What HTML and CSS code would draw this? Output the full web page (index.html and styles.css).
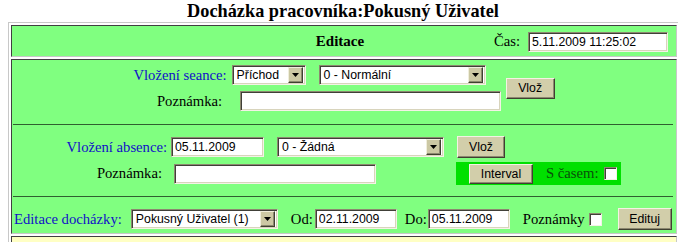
FILE: index.html
```html
<!DOCTYPE html>
<html>
<head>
<meta charset="utf-8">
<link rel="stylesheet" href="styles.css">
</head>
<body>
<div class="title">Docházka pracovníka:Pokusný Uživatel</div>
<table class="main">
  <tr>
    <td class="cell head">
      <div class="headgrid">
        <span></span>
        <b class="htitle">Editace</b>
        <span class="cas">Čas: <input class="inp w139" value="5.11.2009 11:25:02"></span>
      </div>
    </td>
  </tr>
  <tr>
    <td class="cell body">
      <div class="sec sec2">
        <div class="grid2">
          <span class="lbl blue l1">Vložení seance:</span>
          <div class="r1">
            <span class="sel w74"><span class="stext">Příchod</span><span class="arr"><svg width="7" height="4" viewBox="0 0 7 4"><path d="M0 0H7L3.5 4Z" fill="#000"/></svg></span></span>
            <span class="sel w167"><span class="stext">0 - Normální</span><span class="arr"><svg width="7" height="4" viewBox="0 0 7 4"><path d="M0 0H7L3.5 4Z" fill="#000"/></svg></span></span>
          </div>
          <button class="btn b2">Vlož</button>
          <span class="lbl l2">Poznámka:</span>
          <input class="inp w261 i2">
        </div>
      </div>
      <hr class="sep">
      <div class="sec sec3">
        <div class="grid3">
          <span class="lbl blue l3">Vložení absence:</span>
          <input class="inp w93" value="05.11.2009">
          <span class="sel w167 s3"><span class="stext">0 - Žádná</span><span class="arr"><svg width="7" height="4" viewBox="0 0 7 4"><path d="M0 0H7L3.5 4Z" fill="#000"/></svg></span></span>
          <button class="btn b3">Vlož</button>
          <span class="lbl p3">Poznámka:</span>
          <input class="inp w202 i3">
          <div class="gbox">
            <button class="btn bint">Interval</button>
            <span class="scas">S časem:</span>
            <span class="chk"></span>
          </div>
        </div>
      </div>
      <hr class="sep">
      <div class="sec sec4">
        <span class="lbl blue">Editace docházky:</span>
        <span class="sel w147 s4"><span class="stext">Pokusný Uživatel (1)</span><span class="arr"><svg width="7" height="4" viewBox="0 0 7 4"><path d="M0 0H7L3.5 4Z" fill="#000"/></svg></span></span>
        <span class="lbl od">Od:</span>
        <input class="inp w82" value="02.11.2009">
        <span class="lbl do">Do:</span>
        <input class="inp w82" value="05.11.2009">
        <span class="lbl pozn">Poznámky</span>
        <span class="chk c4"></span>
        <button class="btn bed">Edituj</button>
      </div>
    </td>
  </tr>
  <tr>
    <td class="cell yellow"></td>
  </tr>
</table>
</body>
</html>
```
FILE: styles.css
```css
html { overflow: hidden; }
body {
  margin: 0 8px;
  background: #fff;
  font-family: "Liberation Serif", "Times New Roman", serif;
  font-size: 14.67px;
  color: #000;
}
.title {
  text-align: center;
  font-weight: bold;
  font-size: 18.3px;
  line-height: 22px;
}
.main {
  width: 672px;
  table-layout: fixed;
  border-spacing: 2px;
  border: 1px solid;
  border-color: #c8c8c8 #505050 #505050 #c8c8c8;
}
.cell {
  background: #80ff80;
  border: 1px solid;
  border-color: #404040 #c8c8c8 #c8c8c8 #404040;
  padding: 0;
  overflow: hidden;
}
.head { height: 30px; padding: 0 8px 0 0; }
.headgrid {
  display: grid;
  grid-template-columns: 1fr auto 1fr;
  align-items: center;
}
.htitle { font-size: 15px; }
.cas {
  justify-self: end;
  display: flex;
  align-items: center;
  gap: 8px;
  padding-top: 1px;
}
.inp {
  box-sizing: border-box;
  height: 20px;
  margin: 0;
  padding: 0 3px;
  font-family: "Liberation Sans", Arial, sans-serif;
  font-size: 12.3px;
  color: #000;
  background: #fff;
  border: 1px solid;
  border-color: #8c8870 #f4f2e6 #f4f2e6 #8c8870;
  box-shadow: inset 1px 1px 0 #404038, inset -1px -1px 0 #d8d4bc;
  outline: none;
}
.w139 { width: 140px; }
.w261 { width: 261px; }
.w93 { width: 93px; }
.w202 { width: 202px; }
.w82 { width: 82px; }
.sel {
  box-sizing: border-box;
  display: inline-flex;
  align-items: center;
  height: 20px;
  padding: 2px;
  font-family: "Liberation Sans", Arial, sans-serif;
  font-size: 12.3px;
  background: #fff;
  border: 1px solid;
  border-color: #8c8870 #f4f2e6 #f4f2e6 #8c8870;
  box-shadow: inset 1px 1px 0 #404038, inset -1px -1px 0 #d8d4bc;
}
.w74 { width: 74px; }
.w167 { width: 167px; }
.w147 { width: 147px; }
.stext { flex: 1; padding-left: 2px; white-space: nowrap; overflow: hidden; }
.arr {
  box-sizing: border-box;
  width: 15px;
  height: 16px;
  display: flex;
  align-items: center;
  justify-content: center;
  background: #ccc8a4;
  border: 1px solid;
  border-color: #f0eedc #404030 #404030 #f0eedc;
  box-shadow: inset -1px -1px 0 #8c8870;
}
.btn {
  box-sizing: border-box;
  height: 21px;
  margin: 0;
  padding: 0;
  font-family: "Liberation Sans", Arial, sans-serif;
  font-size: 12.3px;
  color: #000;
  background: #d2ceaa;
  border: 1px solid;
  border-color: #f4f2e4 #404030 #404030 #f4f2e4;
  box-shadow: inset -1px -1px 0 #8c8870;
}
.blue { color: #1010c8; }
.lbl { white-space: nowrap; }
.sep {
  margin: 0 3px 0 1px;
  border: 0;
  height: 1px;
  background: #2f602f;
}
.body { vertical-align: top; }
.sec2 { padding: 5px 0 13px; }
.grid2 {
  display: grid;
  grid-template-columns: auto auto auto;
  justify-content: center;
  align-items: center;
  row-gap: 6px;
}
.l1 { grid-column: 1; grid-row: 1; justify-self: end; padding-right: 5px; }
.r1 { grid-column: 2; grid-row: 1; display: flex; gap: 13px; }
.b2 { grid-column: 3; grid-row: 1 / span 2; width: 49px; margin-left: 5px; }
.l2 { grid-column: 1; grid-row: 2; justify-self: center; padding-left: 14px; }
.i2 { grid-column: 2; grid-row: 2; margin-left: 8px; }
.sec3 { padding: 11px 0 11px; }
.grid3 {
  display: grid;
  grid-template-columns: 104px 93px 192px 165px;
  justify-content: center;
  align-items: center;
  row-gap: 4px;
}
.l3 { justify-self: end; padding-right: 4px; }
.s3 { margin-left: 13px; }
.b3 { width: 48px; height: 22px; margin-left: 1px; justify-self: start; }
.p3 { justify-self: end; padding-right: 9px; }
.i3 { grid-column: 2 / span 2; margin-left: 3px; }
.gbox {
  width: 165px;
  height: 23px;
  box-sizing: border-box;
  background: #00e000;
  display: flex;
  align-items: center;
  padding-left: 13px;
}
.bint { width: 64px; height: 20px; }
.scas { margin-left: 13px; color: #0a500a; }
.chk {
  box-sizing: border-box;
  display: inline-block;
  flex: none;
  width: 13px;
  height: 13px;
  background: #fff;
  border: 1px solid;
  border-color: #8c8870 #f4f2e6 #f4f2e6 #8c8870;
  box-shadow: inset 1px 1px 0 #404038;
}
.gbox .chk { margin-left: 5px; }
.sec4 {
  display: flex;
  align-items: center;
  padding: 11px 0 3px 2px;
  height: 22px;
}
.s4 { margin-left: 9px; flex: none; }
.od { margin-left: 13px; margin-right: 2px; }
.do { margin-left: 8px; margin-right: 1px; }
.pozn { margin-left: 13px; margin-right: 4px; }
.bed { width: 54px; height: 22px; margin-left: 16px; flex: none; }
.yellow {
  background: #ffffc4;
  height: 20px;
}
```
